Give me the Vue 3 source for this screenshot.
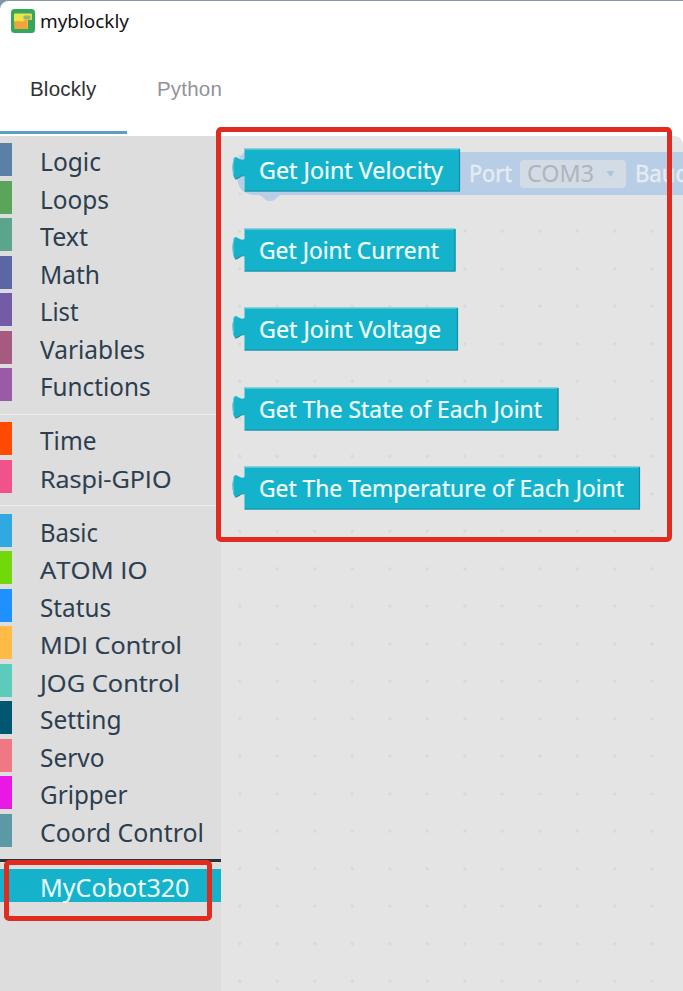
<script setup>
const groups = [
  [
    { name: 'Logic', color: '#5b80a5', w: 61 },
    { name: 'Loops', color: '#5ba55b', w: 69 },
    { name: 'Text', color: '#5ba58c', w: 48 },
    { name: 'Math', color: '#5b67a5', w: 60 },
    { name: 'List', color: '#745ba5', w: 38.5 },
    { name: 'Variables', color: '#a55b80', w: 105 },
    { name: 'Functions', color: '#995ba5', w: 110.5 },
  ],
  [
    { name: 'Time', color: '#ff4a00', w: 56.5 },
    { name: 'Raspi-GPIO', color: '#f1528b', w: 131.5, plain: true },
  ],
  [
    { name: 'Basic', color: '#2fa9df', w: 58 },
    { name: 'ATOM IO', color: '#73d80a', w: 107.5, plain: true },
    { name: 'Status', color: '#1f90ff', w: 71 },
    { name: 'MDI Control', color: '#ffbb45', w: 142, plain: true },
    { name: 'JOG Control', color: '#5ccbb9', w: 140, plain: true },
    { name: 'Setting', color: '#02566f', w: 81.5 },
    { name: 'Servo', color: '#f07885', w: 64.5 },
    { name: 'Gripper', color: '#ea18e5', w: 87.5 },
    { name: 'Coord Control', color: '#5b99a5', w: 164 },
  ],
]

const blocks = [
  { text: 'Get Joint Velocity', width: 215, textWidth: 184 },
  { text: 'Get Joint Current', width: 210.5, textWidth: 180 },
  { text: 'Get Joint Voltage', width: 213, textWidth: 182 },
  { text: 'Get The State of Each Joint', width: 313.5, textWidth: 283 },
  { text: 'Get The Temperature of Each Joint', width: 395, textWidth: 365 },
]
</script>

<template>
  <div class="window">
    <header class="titlebar">
      <svg class="logo" width="24" height="24" viewBox="0 0 24 24">
        <rect width="24" height="24" rx="3.5" fill="#36a65c" />
        <path d="M3 5h18v6h-4v9H3.500z" fill="#f2b83f" />
        <path d="M3 5.500q0-1 1-1h16.500v6H14l-2 1.500H3z" fill="#ede34b" />
        <path d="M4 13l4-1 3 1.500 5-2.500v9H4z" fill="#f1a43b" />
        <rect x="12.500" y="6.500" width="7" height="4" rx="1" fill="#91b774" />
      </svg>
      <svg class="title" width="100" height="30">
        <text x="0" y="21" textLength="89" lengthAdjust="spacingAndGlyphs">myblockly</text>
      </svg>
    </header>
    <nav class="tabs">
      <div class="tab active">Blockly</div>
      <div class="tab">Python</div>
    </nav>
    <main class="content">
      <aside class="toolbox">
        <div v-for="(group, i) in groups" :key="i" class="group">
          <div v-for="item in group" :key="item.name" class="row">
            <span class="swatch" :style="{ background: item.color }"></span>
            <svg class="label" :class="{ plain: item.plain }" width="180" height="33">
              <text x="0" y="28" :textLength="item.w" lengthAdjust="spacingAndGlyphs">{{ item.name }}</text>
            </svg>
          </div>
        </div>
        <div class="row selected">
          <span class="swatch"></span>
          <svg class="label" width="170" height="33">
            <text x="0" y="28" textLength="149.500" lengthAdjust="spacingAndGlyphs">MyCobot320</text>
          </svg>
        </div>
        <div class="mark mark-category"></div>
      </aside>
      <section class="workspace">
        <svg class="backdrop" width="462" height="80" viewBox="221 136 462 80">
          <path d="M245 152H683V195H281c-4 .500-5 6-11 6s-7-5.500-11-6h-6q-16-2-16-20 0-19 8-23z" fill="#b8cee6" />
          <text x="469" y="182" class="ghost" textLength="43" lengthAdjust="spacingAndGlyphs">Port</text>
          <rect x="520" y="160" width="106" height="28" rx="4" fill="#d3dbe5" />
          <text x="527" y="182" class="field" textLength="67" lengthAdjust="spacingAndGlyphs">COM3</text>
          <path d="M606.500 171h8l-4 6z" fill="#a9c4de" />
          <text x="635" y="182" class="ghost" textLength="54" lengthAdjust="spacingAndGlyphs">Baud</text>
        </svg>
        <div class="flyout">
          <svg v-for="b in blocks" :key="b.text" class="block" :width="b.width + 14" height="44">
            <path :d="`M12.500 1H${b.width + 13}V43.500H12.500V28C8.500 26.500 7 31 3 31Q.500 28 .500 19Q1 11 3 9C7 9 8.500 13.500 12.500 11Z`" fill="#14b3cb" />
            <path :d="`M12 1H${b.width + 12.5}`" stroke="#68cbd8" stroke-width="1.500" />
            <path :d="`M12.500 43H${b.width + 12.5}V1`" fill="none" stroke="#168da2" stroke-width="1.200" />
            <path d="M12.500 43V28M1.500 26Q0 18 2 10" fill="none" stroke="#70cbd5" stroke-width="1" />
            <path d="M12 28C8.500 26.500 7 31 3 31" fill="none" stroke="#258d9e" stroke-width="1.200" />
            <text x="27" y="30.500" :textLength="b.textWidth" lengthAdjust="spacingAndGlyphs">{{ b.text }}</text>
          </svg>
        </div>
        <div class="corner"></div>
        <div class="mark mark-flyout"></div>
      </section>
    </main>
  </div>
</template>

<style>
body { background: #8294a8; overflow: hidden; }
</style>

<style scoped>
.window {
  box-sizing: border-box;
  width: 683px;
  height: 991px;
  display: flex;
  flex-direction: column;
  overflow: hidden;
  background: #fff;
  border-top: 1px solid #8997a6;
  border-top-left-radius: 9px;
  font-family: "Noto Sans", "Open Sans", sans-serif;
}
.titlebar { height: 47px; display: flex; padding: 8px 0 0 11px; box-sizing: border-box; }
.title { margin: -2px 0 0 4.500px; font-size: 18.500px; fill: #111; }
.tabs { height: 88px; display: flex; flex: none; }
.tab {
  box-sizing: border-box;
  width: 127px;
  height: 86px;
  padding: 29px 0 0 30px;
  font: 20.500px/24px "Liberation Sans", Arial, sans-serif;
  color: #909399;
  letter-spacing: .2px;
}
.tab.active { color: #303133; border-bottom: 3px solid #5aa0c4; }
.content { display: flex; flex: 1; }
.toolbox { position: relative; width: 221px; box-sizing: border-box; padding-top: 7px; background: #ddd; }
.group { display: flex; flex-direction: column; }
.group + .group { margin-top: 8px; padding-top: 7.500px; border-top: 1px solid #ebebeb; }
.row { display: flex; height: 33px; margin-bottom: 4.500px; }
.swatch { width: 12px; }
.label { margin-left: 28px; font-size: 24.500px; fill: #2c3e50; overflow: visible; }
.plain { font-family: "Open Sans", sans-serif; }
.plain text { stroke: #2c3e50; stroke-width: .2px; }
.selected { position: relative; margin-top: 18px; background: #14b3cb; }
.selected::before { content: ""; position: absolute; left: 0; top: -10px; width: 100%; height: 3px; background: #2b303b; }
.selected .label { fill: #f2ffff; }
.workspace {
  position: relative;
  flex: 1;
  background-color: #e4e4e4;
  background-image: radial-gradient(circle at center, #d3d3d3 0, #d8d8d8 1px, transparent 2px);
  background-size: 37.500px 37.500px;
  background-position: 0 1.500px;
}
.backdrop { position: absolute; left: 0; top: 0; }
.ghost { font-size: 23.500px; fill: #e5ebf2; stroke: #e5ebf2; stroke-width: .5px; }
.field { font-size: 23.500px; fill: #b0b5bb; }
.flyout { position: relative; display: flex; flex-direction: column; gap: 35.500px; padding: 12.400px 0 0 11px; }
.block { display: block; flex: none; }
.block text { font-size: 23.500px; fill: #f2ffff; stroke: #f2ffff; stroke-width: .2px; }
.corner { position: absolute; right: 0; top: 0; width: 8px; height: 8px; background: radial-gradient(circle at 0 100%, transparent 7.500px, #fff 8px); }
.mark { position: absolute; box-sizing: border-box; border: 5px solid #e02b20; border-radius: 5px; }
.mark-category { left: 4px; top: 724px; width: 208px; height: 61px; }
.mark-flyout { left: -5px; top: -9px; width: 456px; height: 415px; }
</style>
